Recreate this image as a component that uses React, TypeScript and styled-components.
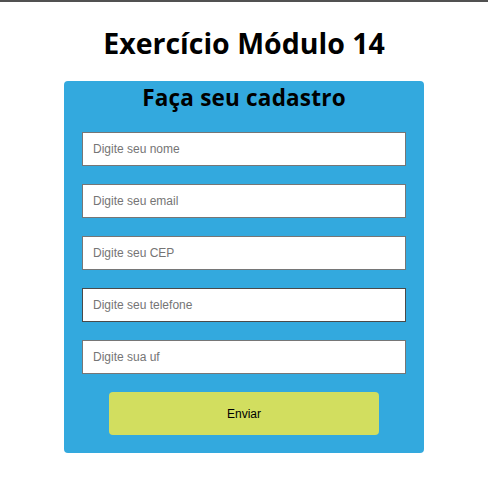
import React from "react";
import styled, { createGlobalStyle } from "styled-components";

const Global = createGlobalStyle`
  html, body { margin: 0; padding: 0; background: #fff; }
  * { box-sizing: border-box; }
`;

const TopBar = styled.div`
  height: 2px;
  background: #515151;
`;

const Page = styled.main`
  display: flex;
  flex-direction: column;
  align-items: center;
`;

const Title = styled.h1`
  margin: 22px 0 0;
  height: 57px;
  font-family: "Open Sans", sans-serif;
  font-weight: 700;
  font-size: 28.5px;
  line-height: 38px;
  color: #000;
`;

const Card = styled.form`
  width: 360px;
  background: #33a9de;
  border-radius: 4px;
  padding: 2px 18px 18px;
  display: flex;
  flex-direction: column;
  align-items: center;
`;

const CardTitle = styled.h2`
  margin: 0 0 19px;
  font-family: "Open Sans", sans-serif;
  font-weight: 700;
  font-size: 22.5px;
  line-height: 30px;
  letter-spacing: 0.2px;
  color: #000;
`;

const Fields = styled.div`
  width: 100%;
  display: flex;
  flex-direction: column;
  gap: 18px;
`;

const Input = styled.input<{ $dark?: boolean }>`
  width: 100%;
  height: 34px;
  border: 1px solid ${(p) => (p.$dark ? "#4a4a4a" : "#767676")};
  background: #fff;
  padding: 0 10px;
  font-family: "Liberation Sans", Arial, sans-serif;
  font-size: 12px;
  outline: none;
  &::placeholder { color: #757575; }
`;

const Button = styled.button`
  margin-top: 18px;
  width: 270px;
  height: 43px;
  border: none;
  border-radius: 4px;
  background: #d2de5f;
  font-family: "Liberation Sans", Arial, sans-serif;
  font-size: 12px;
  color: #000;
`;

export default function App() {
  return (
    <>
      <Global />
      <TopBar />
      <Page>
        <Title>Exercício Módulo 14</Title>
        <Card onSubmit={(e) => e.preventDefault()}>
          <CardTitle>Faça seu cadastro</CardTitle>
          <Fields>
            <Input placeholder="Digite seu nome" />
            <Input placeholder="Digite seu email" />
            <Input placeholder="Digite seu CEP" />
            <Input placeholder="Digite seu telefone" $dark />
            <Input placeholder="Digite sua uf" />
          </Fields>
          <Button type="submit">Enviar</Button>
        </Card>
      </Page>
    </>
  );
}
